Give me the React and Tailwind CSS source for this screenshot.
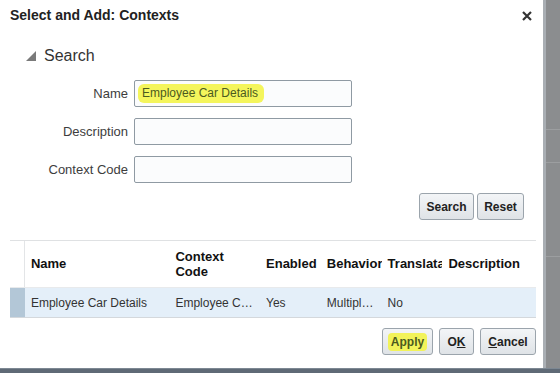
import React from 'react'

const font = { fontFamily: '"Liberation Sans", Arial, sans-serif' }

function Field({ label, children }) {
  return (
    <div className="flex items-center h-[27px]">
      <div className="w-[124px] text-right text-[13px] text-[#3d3d3d] pr-[6px]">{label}</div>
      <div className="w-[218px] h-[27px] border border-[#8f9aa3] rounded-[2px] bg-[#fbfcfd] flex items-center px-[3px]">
        {children}
      </div>
    </div>
  )
}

function Btn({ children, className = '' }) {
  return (
    <button
      className={
        'h-[27px] px-[6px] border border-[#9ba4ac] rounded-[3px] bg-gradient-to-b from-[#f3f5f7] to-[#dfe3e7] text-[12px] font-bold text-[#222] flex items-center justify-center ' +
        className
      }
    >
      {children}
    </button>
  )
}

export default function App() {
  return (
    <div style={font} className="w-[560px] h-[373px] flex flex-col overflow-hidden bg-[#8a8c8e]">
      <div className="flex h-[368px]">
        <div className="w-[546px] bg-white border-r-[3px] border-[#a9aeb3] flex flex-col">
          <div className="flex items-center justify-between h-[30px] pl-[10px] pr-[11px] pt-[1px]">
            <h2 className="text-[14px] font-bold text-[#222]">Select and Add: Contexts</h2>
            <svg width="10" height="10" viewBox="0 0 10 10" className="mt-[1px]">
              <path d="M1 1 L9 9 M9 1 L1 9" stroke="#333" strokeWidth="2.2" />
            </svg>
          </div>

          <div className="flex items-center h-[20px] mt-[16px] pl-[26px]">
            <svg width="10" height="10" viewBox="0 0 10 10">
              <polygon points="10,0 10,10 0,10" fill="#7a7a7a" />
            </svg>
            <span className="ml-[8px] text-[16px] text-[#333]">Search</span>
          </div>

          <div className="flex flex-col gap-[11px] mt-[14px] pl-[10px]">
            <Field label="Name">
              <span className="text-[12px] text-[#4b5a1f] bg-[#f4f55c] rounded-[6px] pl-[4px] pr-[6px] py-[2px] leading-[15px]">
                Employee Car Details
              </span>
            </Field>
            <Field label="Description" />
            <Field label="Context Code" />
          </div>

          <div className="flex justify-end gap-[3px] mt-[10px] pr-[19px]">
            <Btn className="w-[55px]">Search</Btn>
            <Btn className="w-[47px]">Reset</Btn>
          </div>

          <div className="ml-[10px] mr-[7px] mt-[20px] border-t border-[#dfe1e3]">
            <div className="flex h-[46px] text-[13px] font-bold text-[#111]">
              <div className="w-[15px] border-r border-[#e3e5e7]" />
              {[
                ['Name', 145],
                ['Context Code', 91],
                ['Enabled', 61],
                ['Behavior', 61],
                ['Translatable', 61],
                ['Description', 94],
              ].map(([t, w]) => (
                <div key={t} style={{ width: w }} className="pl-[6px] flex items-center overflow-hidden">
                  <span className={t === 'Context Code' ? 'leading-[15px] w-[60px]' : 'whitespace-nowrap'}>{t}</span>
                </div>
              ))}
            </div>
            <div className="flex h-[31px] text-[12px] text-[#333] bg-[#e4eff9] border-t border-[#e8eaec] border-b border-b-[#d4d8dc]">
              <div className="w-[15px] bg-[#b3c7d7]" />
              {[
                ['Employee Car Details', 145],
                ['Employee C…', 91],
                ['Yes', 61],
                ['Multipl…', 61],
                ['No', 61],
                ['', 94],
              ].map(([t, w], i) => (
                <div key={i} style={{ width: w }} className="pl-[6px] flex items-center whitespace-nowrap overflow-hidden">
                  {t}
                </div>
              ))}
            </div>
          </div>

          <div className="flex justify-end gap-[6px] mt-[10px] pr-[7px]">
            <Btn className="w-[51px]">
              <span className="bg-[#f2f35a] text-[#4b5a1f] px-[3px] rounded-[4px]">Apply</span>
            </Btn>
            <Btn className="w-[35px]">
              O<span className="underline">K</span>
            </Btn>
            <Btn className="w-[56px]">
              <span className="underline">C</span>ancel
            </Btn>
          </div>
        </div>
        <div className="flex-1 flex flex-col bg-[#8b8d8f]">
          <div className="h-[130px] border-b border-[#9c9ea0]" />
          <div className="h-[33px] border-b border-[#9c9ea0]" />
          <div className="h-[94px] border-b border-[#9c9ea0]" />
        </div>
      </div>
      <div className="h-[5px] bg-[#5f6a76] border-t border-[#7d8893]" />
    </div>
  )
}
